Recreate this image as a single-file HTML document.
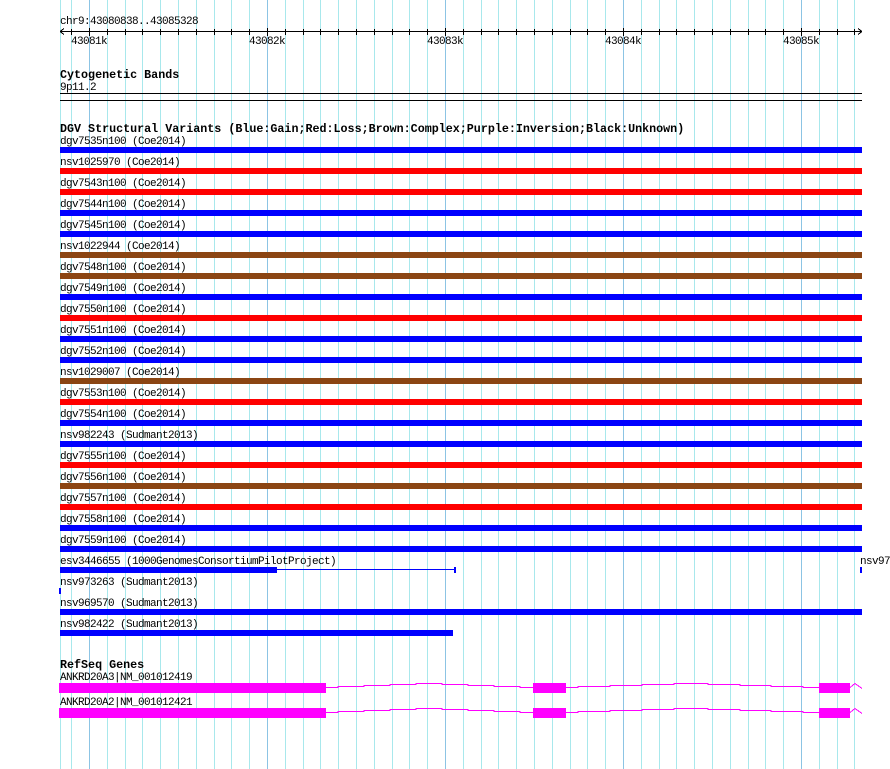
<!DOCTYPE html>
<html><head><meta charset="utf-8"><style>
html,body{margin:0;padding:0;background:#fff;}
svg{display:block;}
text{font-family:"Liberation Mono",monospace;font-size:11px;letter-spacing:-0.6px;fill:#000;}
.b{font-weight:bold;font-size:11.7px;letter-spacing:0;}
</style></head><body>
<svg width="890" height="769" xmlns="http://www.w3.org/2000/svg" shape-rendering="crispEdges">
<path stroke="#a8e8ec" stroke-width="1" d="M60.5 0V769M71.5 0V769M107.5 0V769M125.5 0V769M142.5 0V769M160.5 0V769M178.5 0V769M196.5 0V769M214.5 0V769M231.5 0V769M249.5 0V769M285.5 0V769M303.5 0V769M320.5 0V769M338.5 0V769M356.5 0V769M374.5 0V769M392.5 0V769M409.5 0V769M427.5 0V769M463.5 0V769M481.5 0V769M498.5 0V769M516.5 0V769M534.5 0V769M552.5 0V769M570.5 0V769M587.5 0V769M605.5 0V769M641.5 0V769M659.5 0V769M676.5 0V769M694.5 0V769M712.5 0V769M730.5 0V769M748.5 0V769M765.5 0V769M783.5 0V769M819.5 0V769M837.5 0V769M854.5 0V769"/>
<path stroke="#8cc4e4" stroke-width="1" d="M89.5 0V769M267.5 0V769M445.5 0V769M623.5 0V769M801.5 0V769"/>
<text x="60" y="24">chr9:43080838..43085328</text>
<path stroke="#000" stroke-width="1" fill="none" d="M60 31.5H862M60 31.5l4-3M60 31.5l4 3M862 31.5l-4-3M862 31.5l-4 3M71.5 29V35M89.5 28V36M107.5 29V35M125.5 29V35M142.5 29V35M160.5 29V35M178.5 29V35M196.5 29V35M214.5 29V35M231.5 29V35M249.5 29V35M267.5 28V36M285.5 29V35M303.5 29V35M320.5 29V35M338.5 29V35M356.5 29V35M374.5 29V35M392.5 29V35M409.5 29V35M427.5 29V35M445.5 28V36M463.5 29V35M481.5 29V35M498.5 29V35M516.5 29V35M534.5 29V35M552.5 29V35M570.5 29V35M587.5 29V35M605.5 29V35M623.5 28V36M641.5 29V35M659.5 29V35M676.5 29V35M694.5 29V35M712.5 29V35M730.5 29V35M748.5 29V35M765.5 29V35M783.5 29V35M801.5 28V36M819.5 29V35M837.5 29V35M854.5 29V35"/>
<text x="71" y="44">43081k</text><text x="249" y="44">43082k</text><text x="427" y="44">43083k</text><text x="605" y="44">43084k</text><text x="783" y="44">43085k</text>
<text x="60" y="78" class="b">Cytogenetic Bands</text>
<text x="60" y="90">9p11.2</text>
<rect x="60" y="93" width="802" height="1" fill="#000"/><rect x="60" y="100" width="802" height="1" fill="#000"/>
<text x="60" y="132" class="b">DGV Structural Variants (Blue:Gain;Red:Loss;Brown:Complex;Purple:Inversion;Black:Unknown)</text>
<text x="60" y="144">dgv7535n100 (Coe2014)</text><rect x="60" y="147" width="802" height="6" fill="#0000ff"/>
<text x="60" y="165">nsv1025970 (Coe2014)</text><rect x="60" y="168" width="802" height="6" fill="#ff0000"/>
<text x="60" y="186">dgv7543n100 (Coe2014)</text><rect x="60" y="189" width="802" height="6" fill="#ff0000"/>
<text x="60" y="207">dgv7544n100 (Coe2014)</text><rect x="60" y="210" width="802" height="6" fill="#0000ff"/>
<text x="60" y="228">dgv7545n100 (Coe2014)</text><rect x="60" y="231" width="802" height="6" fill="#0000ff"/>
<text x="60" y="249">nsv1022944 (Coe2014)</text><rect x="60" y="252" width="802" height="6" fill="#8b4513"/>
<text x="60" y="270">dgv7548n100 (Coe2014)</text><rect x="60" y="273" width="802" height="6" fill="#8b4513"/>
<text x="60" y="291">dgv7549n100 (Coe2014)</text><rect x="60" y="294" width="802" height="6" fill="#0000ff"/>
<text x="60" y="312">dgv7550n100 (Coe2014)</text><rect x="60" y="315" width="802" height="6" fill="#ff0000"/>
<text x="60" y="333">dgv7551n100 (Coe2014)</text><rect x="60" y="336" width="802" height="6" fill="#0000ff"/>
<text x="60" y="354">dgv7552n100 (Coe2014)</text><rect x="60" y="357" width="802" height="6" fill="#0000ff"/>
<text x="60" y="375">nsv1029007 (Coe2014)</text><rect x="60" y="378" width="802" height="6" fill="#8b4513"/>
<text x="60" y="396">dgv7553n100 (Coe2014)</text><rect x="60" y="399" width="802" height="6" fill="#ff0000"/>
<text x="60" y="417">dgv7554n100 (Coe2014)</text><rect x="60" y="420" width="802" height="6" fill="#0000ff"/>
<text x="60" y="438">nsv982243 (Sudmant2013)</text><rect x="60" y="441" width="802" height="6" fill="#0000ff"/>
<text x="60" y="459">dgv7555n100 (Coe2014)</text><rect x="60" y="462" width="802" height="6" fill="#ff0000"/>
<text x="60" y="480">dgv7556n100 (Coe2014)</text><rect x="60" y="483" width="802" height="6" fill="#8b4513"/>
<text x="60" y="501">dgv7557n100 (Coe2014)</text><rect x="60" y="504" width="802" height="6" fill="#ff0000"/>
<text x="60" y="522">dgv7558n100 (Coe2014)</text><rect x="60" y="525" width="802" height="6" fill="#0000ff"/>
<text x="60" y="543">dgv7559n100 (Coe2014)</text><rect x="60" y="546" width="802" height="6" fill="#0000ff"/>
<text x="60" y="564">esv3446655 (1000GenomesConsortiumPilotProject)</text>
<rect x="60" y="567" width="217" height="6" fill="#0000ff"/><rect x="277" y="569" width="178" height="1" fill="#0000ff"/><rect x="454" y="567" width="2" height="6" fill="#0000ff"/>
<text x="860" y="564">nsv97</text><rect x="860" y="567" width="2" height="6" fill="#0000ff"/>
<text x="60" y="585">nsv973263 (Sudmant2013)</text><rect x="59" y="588" width="2" height="6" fill="#0000ff"/>
<text x="60" y="606">nsv969570 (Sudmant2013)</text><rect x="60" y="609" width="802" height="6" fill="#0000ff"/>
<text x="60" y="627">nsv982422 (Sudmant2013)</text><rect x="60" y="630" width="393" height="6" fill="#0000ff"/>
<text x="60" y="668" class="b">RefSeq Genes</text>
<text x="60" y="680">ANKRD20A3|NM_001012419</text>
<rect x="59" y="683" width="267" height="10" fill="#ff00ff"/><rect x="533" y="683" width="33" height="10" fill="#ff00ff"/><rect x="819" y="683" width="31" height="10" fill="#ff00ff"/>
<path fill="none" stroke="#ff00ff" stroke-width="1" d="M326 687.5H338V686.5H364V685.5H390V684.5H416V683.5H442V684.5H468V685.5H494V686.5H520V687.5H533M566 687.5H578V686.5H610V685.5H642V684.5H674V683.5H708V684.5H740V685.5H771V686.5H803V687.5H819M850 687.5L855 683.5L862 688.5"/>
<text x="60" y="705">ANKRD20A2|NM_001012421</text>
<rect x="59" y="708" width="267" height="10" fill="#ff00ff"/><rect x="533" y="708" width="33" height="10" fill="#ff00ff"/><rect x="819" y="708" width="31" height="10" fill="#ff00ff"/>
<path fill="none" stroke="#ff00ff" stroke-width="1" d="M326 712.5H338V711.5H364V710.5H390V709.5H416V708.5H442V709.5H468V710.5H494V711.5H520V712.5H533M566 712.5H578V711.5H610V710.5H642V709.5H674V708.5H708V709.5H740V710.5H771V711.5H803V712.5H819M850 712.5L855 708.5L862 713.5"/>
</svg>
</body></html>
